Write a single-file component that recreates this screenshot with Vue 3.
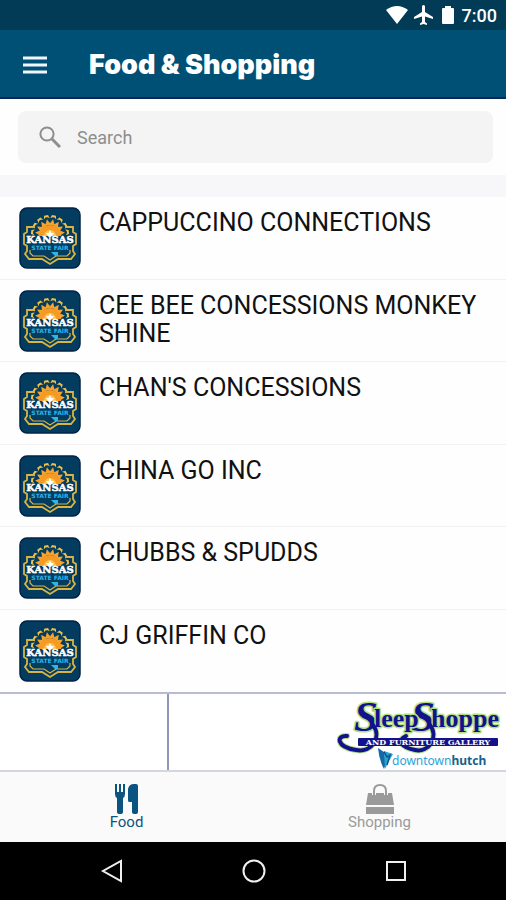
<script setup>
import { ref, computed } from 'vue'

const query = ref('')
const activeTab = ref('food')
const vendors = [
  'CAPPUCCINO CONNECTIONS',
  'CEE BEE CONCESSIONS MONKEY SHINE',
  "CHAN'S CONCESSIONS",
  'CHINA GO INC',
  'CHUBBS & SPUDDS',
  'CJ GRIFFIN CO',
]
const shown = computed(() =>
  vendors.filter((name) => name.toLowerCase().includes(query.value.trim().toLowerCase()))
)
const rays = [-84, -60, -36, -12, 12, 36, 60, 84]
</script>

<template>
  <div class="screen">
    <div class="status">
      <svg width="22" height="18" viewBox="0 0 22 18"><path d="M0 4 Q11 -4 22 4 L11 18Z" fill="#fff" /></svg>
      <svg width="20" height="20" viewBox="2 2 20 20"><path d="M21 16v-2l-8-5V3.500a1.500 1.500 0 0 0-3 0V9l-8 5v2l8-2.500V19l-2 1.500V22l3.500-1 3.500 1v-1.500L13 19v-5.500z" fill="#fff" /></svg>
      <svg class="battery" width="12" height="18" viewBox="0 0 12 18"><path d="M1 2H3V0H9V2H11Q12 2 12 3V17Q12 18 11 18H1Q0 18 0 17V3Q0 2 1 2Z" fill="#fff" /></svg>
      <span>7:00</span>
    </div>

    <header class="bar">
      <button class="menu" type="button" aria-label="Menu">
        <svg width="24" height="18" viewBox="0 0 24 18"><path d="M0 2H24M0 9H24M0 16H24" stroke="#f2f6fa" stroke-width="3" /></svg>
      </button>
      <h1>Food &amp; Shopping</h1>
    </header>

    <div class="search-area">
      <label class="search">
        <svg width="22" height="22" viewBox="0 0 22 22" fill="none" stroke="#8e8e8e"><circle cx="8" cy="8" r="6.600" stroke-width="2" /><path d="M13 13L21 21" stroke-width="3" /></svg>
        <input v-model="query" type="text" placeholder="Search" aria-label="Search" />
      </label>
    </div>

    <ul class="list">
      <li v-for="name in shown" :key="name">
        <svg class="logo" width="62" height="62" viewBox="0 0 62 62">
          <rect x="1" y="1" width="60" height="60" rx="7" fill="#033c5f" stroke="#00234a" stroke-width="1.500" />
          <g transform="translate(31 27)">
            <g v-for="a in rays" :key="a" :transform="`rotate(${a})`">
              <path d="M-3 -9L0 -15L3 -9Z" fill="#f6a32c" />
              <path d="M-3 -15.500L-2 -19H2L3 -15.500L1 -17H-1Z" fill="#efc04a" />
            </g>
            <path d="M-11 2A11 11 0 0 1 11 2Z" fill="#f59b25" />
            <path d="M-6 2A6 6 0 0 1 6 2Z" fill="#ffc24d" />
          </g>
          <path d="M15 20H8V25L5 27V37L8 39V44L6 47L10 52H23L31 57L39 52H52L56 47L54 44V39L57 37V27L54 25V20H47" fill="none" stroke="#d9b443" stroke-width="1.800" />
          <path d="M11 43V46L14 49H25L31 53L37 49H48L51 46V43" fill="none" stroke="#d9b443" stroke-width="1.200" />
          <path d="M31 23L32.300 26H35L33 29H29L27 26H29.700Z" fill="#fff" />
          <text x="31" y="36" text-anchor="middle" class="kansas">KANSAS</text>
          <text x="31" y="43" text-anchor="middle" class="fair">STATE FAIR</text>
          <path d="M32 45H39V49L36 49L34 47Z" fill="#2eb5e8" />
        </svg>
        <span class="name">{{ name }}</span>
      </li>
    </ul>

    <div class="banner">
      <div class="banner-left"></div>
      <a class="banner-right" href="#" aria-label="Sleep Shoppe and Furniture Gallery, downtownhutch">
        <svg width="166" height="76" viewBox="17 3 166 76">
          <g class="ink">
            <path class="glow" d="M53 34C62 46 52 62 36 59C16 56 16 44 27 45" />
            <path class="glow" d="M110 34C119 46 109 62 95 59C80 56 77 49 86 45" />
            <text x="34" y="40" class="cap">S</text>
            <text x="91" y="40" class="cap">S</text>
            <text x="54" y="36" class="word">leep</text>
            <text x="111" y="36" class="word">hoppe</text>
            <path d="M53 34C62 46 52 62 36 59C16 56 16 44 27 45" />
            <path d="M110 34C119 46 109 62 95 59C80 56 77 49 86 45" />
          </g>
          <rect x="38" y="47" width="140" height="8" rx="1" fill="#12128c" />
          <text x="108" y="54" text-anchor="middle" class="gallery">AND FURNITURE GALLERY</text>
          <path d="M58 57L64 61L66 72L64 78Q59 69 58 57Z" fill="#1769a5" />
          <path d="M64 60L73 63L67 74L65 78Z" fill="#27a8d2" />
          <path d="M64 61L67 66L70 64L67 74" fill="none" stroke="#0d538f" stroke-width="1.500" />
          <text x="72" y="74" class="hutch"><tspan fill="#2ca3d4">downtown</tspan><tspan class="bold">hutch</tspan></text>
        </svg>
      </a>
    </div>

    <nav class="tabs">
      <button type="button" :class="{ active: activeTab === 'food' }" @click="activeTab = 'food'">
        <svg width="26" height="30" viewBox="0 0 26 30" fill="currentColor"><path d="M1 0H3V8H5V0H7V8H9V0H11V10Q11 13 9 14V28Q9 30 6 30Q3 30 3 28V14Q1 13 1 10Z" /><path d="M14 5Q15 0 20 0H22Q24 0 24 2V28Q24 30 21 30Q18 30 18 28V18H15Q14 18 14 16Z" /></svg>
        <span>Food</span>
      </button>
      <button type="button" :class="{ active: activeTab === 'shopping' }" @click="activeTab = 'shopping'">
        <svg width="30" height="30" viewBox="0 0 30 30"><path d="M3 9H27L29 21H1ZM1 23H29V30H1Z" fill="currentColor" /><path d="M9 11V7Q9 1 15 1Q21 1 21 7V11" fill="none" stroke="#fafafa" stroke-width="4" /><path d="M9 11V7Q9 1 15 1Q21 1 21 7V11" fill="none" stroke="currentColor" stroke-width="2" /><path d="M12 9H18V13H12Z" fill="currentColor" /></svg>
        <span>Shopping</span>
      </button>
    </nav>

    <div class="system">
      <button type="button" aria-label="Back"><svg width="24" height="24" viewBox="0 0 24 24"><path d="M21 2V22L3 12Z" /></svg></button>
      <button type="button" aria-label="Home"><svg width="24" height="24" viewBox="0 0 24 24"><circle cx="12" cy="12" r="10.500" /></svg></button>
      <button type="button" aria-label="Recent apps"><svg width="24" height="24" viewBox="0 0 24 24"><rect x="3" y="3" width="18" height="18" /></svg></button>
    </div>
  </div>
</template>

<style>
body {
  margin: 0;
}
</style>

<style scoped>
.screen {
  display: flex;
  flex-direction: column;
  min-height: 100vh;
  font-family: Roboto, sans-serif;
  background: #fefefe;
}
.screen * {
  box-sizing: border-box;
}
button {
  padding: 0;
  border: 0;
  background: none;
  font: inherit;
  color: inherit;
  cursor: pointer;
}
svg {
  display: block;
}
.status {
  display: flex;
  align-items: center;
  justify-content: flex-end;
  gap: 6px;
  height: 30px;
  padding-right: 9px;
  background: #023b56;
  color: #fff;
  font-size: 18px;
  font-weight: 500;
}
.battery {
  margin: 0 2px;
}
.bar {
  display: flex;
  align-items: center;
  gap: 42px;
  height: 69px;
  padding: 2px 23px 0;
  background: #005075;
  border-bottom: 2px solid #06275c;
}
h1 {
  margin: 0;
  color: #fff;
  font-family: Inter, sans-serif;
  font-size: 27px;
  font-weight: 900;
  line-height: 32px;
}
.search-area {
  padding: 12px 13px 12px 18px;
  border-bottom: 22px solid #f7f7f9;
}
.search {
  display: flex;
  align-items: center;
  gap: 16px;
  height: 52px;
  padding: 0 21px;
  border-radius: 8px;
  background: #f4f4f4;
}
input {
  flex: 1;
  min-width: 0;
  padding: 0;
  border: 0;
  outline: 0;
  background: none;
  color: #333;
  font: 18px Roboto, sans-serif;
}
input::placeholder {
  color: #8e8e8e;
  opacity: 1;
}
.list {
  flex: 1;
  display: grid;
  grid-auto-rows: minmax(82px, 1fr);
  margin: 0;
  padding: 0;
  list-style: none;
}
.list li {
  display: flex;
  align-items: flex-start;
  gap: 18px;
  padding: 10px 19px 9px 19px;
  border-bottom: 1px solid #f1f1f1;
}
.list li:last-child {
  border-bottom: 0;
}
.logo {
  flex: none;
}
.kansas {
  font: 700 10px "DejaVu Serif", serif;
  fill: #fff;
  stroke: #fff;
  stroke-width: 0.5;
}
.fair {
  font: 700 6px "DejaVu Sans", sans-serif;
  fill: #2eb5e8;
}
.name {
  padding-top: 2px;
  color: #111;
  font-size: 25px;
  line-height: 28px;
}
.banner {
  display: grid;
  grid-template-columns: 1fr 2fr;
  height: 80px;
  border-top: 2px solid #b9bccf;
  border-bottom: 2px solid #d3d5e1;
  background: #fff;
}
.banner-left {
  border-right: 2px solid #9195b8;
}
.banner-right {
  display: flex;
  justify-content: flex-end;
  padding-right: 3px;
}
.ink {
  font-family: "Liberation Serif", serif;
  fill: none;
  stroke-linecap: round;
  stroke-linejoin: round;
}
.ink path {
  stroke: #12128c;
  stroke-width: 4;
}
.ink .glow {
  stroke: #b5df83;
  stroke-width: 6;
}
.ink text {
  fill: #12128c;
  stroke: #b5df83;
  stroke-width: 3;
  paint-order: stroke;
}
.cap {
  font-size: 43px;
  font-style: italic;
  font-weight: 700;
}
.word {
  font-size: 26px;
  font-weight: 700;
}
.gallery {
  font: 700 8px "DejaVu Serif", serif;
  fill: #fff;
}
.hutch {
  font: 12px "Noto Sans", sans-serif;
}
.bold {
  fill: #17628c;
  font-weight: 700;
}
.tabs {
  display: grid;
  grid-template-columns: 1fr 1fr;
  height: 70px;
  background: #fafafa;
  color: #9a9a9a;
}
.tabs button {
  display: flex;
  flex-direction: column;
  align-items: center;
  padding-top: 12px;
  font-size: 15px;
  line-height: 16px;
}
.tabs .active {
  color: #0b5482;
}
.system {
  display: flex;
  align-items: center;
  justify-content: space-between;
  height: 58px;
  padding: 0 98px 0 100px;
  background: #000;
}
.system svg {
  fill: none;
  stroke: #f0f0f0;
  stroke-width: 2;
}
</style>
